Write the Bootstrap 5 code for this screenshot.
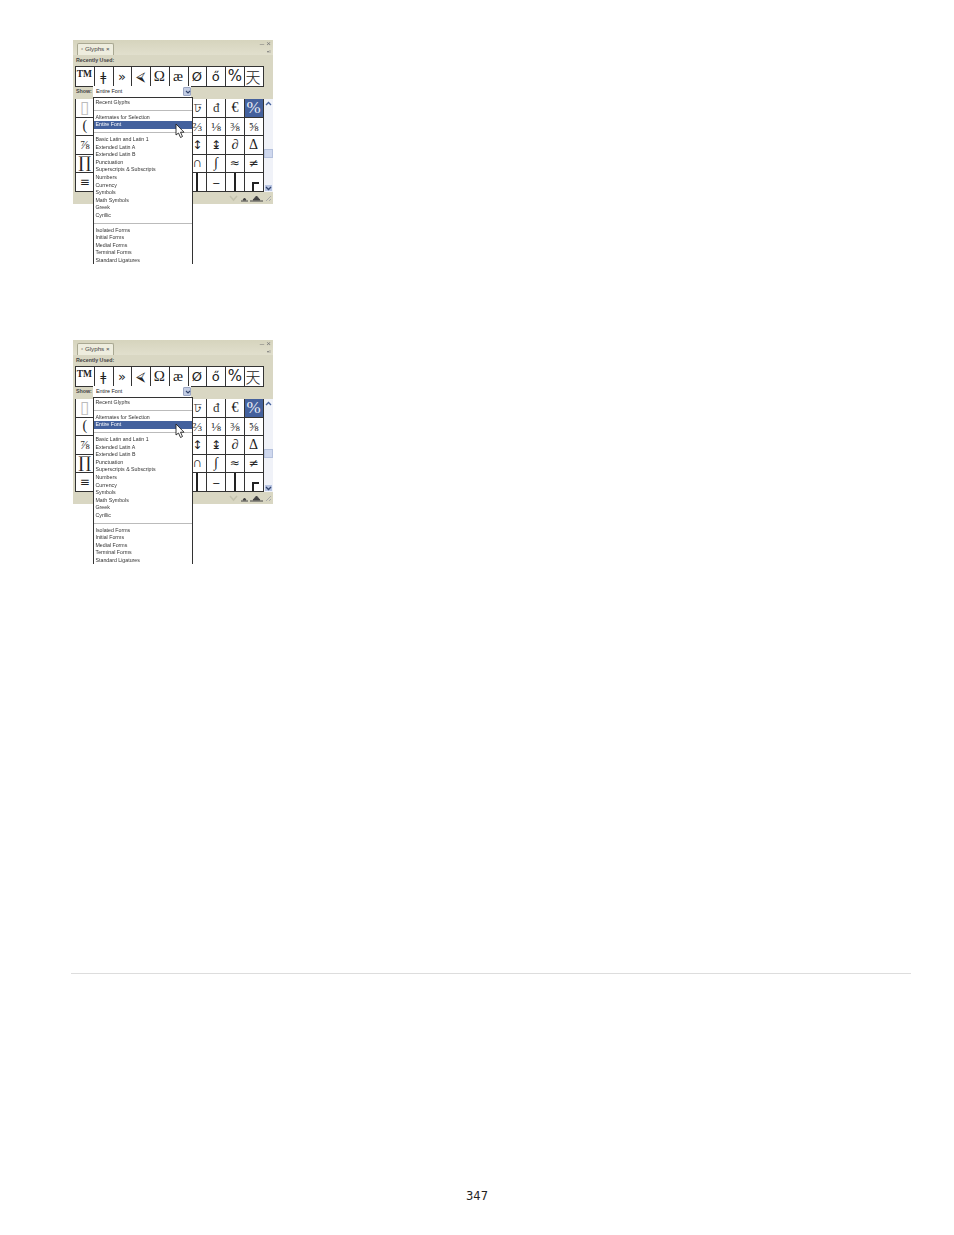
<!DOCTYPE html>
<html lang="en">
<head>
<meta charset="utf-8">
<title>Glyphs panel</title>
<link href="https://cdn.jsdelivr.net/npm/bootstrap@5.3.0/dist/css/bootstrap.min.css" rel="stylesheet">
<style>
html,body{height:100%;background:#fff}
.sheet{width:954px;height:1235px;padding:40px 43px 0 73px;font-family:"DejaVu Sans",sans-serif}
.shot-slot{height:300px}
.gpanel{position:relative;width:200px;height:164px;background:#d9d7c3;font-family:"Liberation Sans",sans-serif;color:#222;filter:blur(.4px);border-radius:1px}
.gtop{height:15px;background:linear-gradient(#d6d4bd,#e1dfcd);padding:3px 0 0 4px}
.gtab{width:37px;height:12px;background:#eeedde;border:1px solid #a9a892;border-bottom:0;border-radius:2px 2px 0 0;font-size:6.2px;line-height:10px;padding-left:3px;color:#444;white-space:nowrap}
.gwin{position:absolute;right:2px;top:0;font-size:8px;line-height:8px;color:#777}
.gmenuic{position:absolute;right:2px;top:9px;width:9px;height:5px;font-size:4px;line-height:5px;color:#777;text-align:right}
.glabel{height:11px;padding:2px 0 0 3px;font-size:5.3px;line-height:7px;font-weight:700;color:#444}
.grecent{display:grid;grid-template-columns:repeat(10,18.75px);grid-auto-rows:19px;margin-left:2px;width:189px;background:#fff;border:1px solid #333;border-width:1px 0 1px 1px}
.gcell{display:flex;align-items:center;justify-content:center;border-right:1px solid #333;border-bottom:1px solid #333;background:#fff;font-family:"Liberation Serif",serif;font-size:14px;line-height:1;color:#222;overflow:hidden}
.grecent .gcell{border-bottom:0;font-family:"DejaVu Sans",sans-serif;font-size:13px;padding-right:1px}
.grecent .gcell.tm{font-family:"Liberation Serif",serif;font-size:9.500px;font-weight:700;align-items:flex-start;padding-top:3px}
.grecent .gcell.pct{font-size:15px;letter-spacing:-1px}
.grecent .gcell.lig{font-family:"Liberation Serif",serif;font-size:15px}
.grecent .gcell.cjk{font-family:"Noto Sans CJK SC",sans-serif;font-weight:300;font-size:15px}
.gshow{height:12px;display:flex;padding-left:3px;font-size:5.3px;line-height:9px;color:#444;font-weight:700}
.gselect{position:absolute;left:20px;top:46px;width:98px;height:11px;background:#fff;font-weight:400;color:#222;padding-left:3px;font-size:5.400px;line-height:11px}
.gselect i{position:absolute;right:0;top:1px;width:8px;height:9px;background:#c3cde4;border:1px solid #9aa6c4;border-radius:1px}
.gselect svg{position:absolute;left:1px;top:2px}
.gmain{display:flex;margin-left:2px}
.gglyphs{display:grid;grid-template-columns:repeat(10,18.75px);grid-auto-rows:18.500px;width:188.500px;border-left:1px solid #333;background:#fff}
.gcell.sel{background:#44619d;color:#e8ecf6;font-size:17px}
.gcell.dim{color:#bbb;font-size:17px}
.gcell.big{font-family:"DejaVu Serif",serif;font-size:16px}
.gcell.frac{font-size:13px;color:#333}
.gcell.math{font-family:"DejaVu Sans",sans-serif;font-size:12px}
.gcell.dash{font-weight:700;font-size:12px}
.gstem{display:block;align-self:stretch;width:2px;background:#222}
.gcorner{display:block;align-self:flex-end;width:7px;height:9px;border:solid #222;border-width:2px 0 0 2px;margin-left:3px}
.gscroll{position:relative;width:9px;background:#f0f2f8}
.gscroll b{position:absolute;left:0;width:9px;background:#cfd8ee;border:1px solid #b5c1dd}
.gscroll svg{position:absolute;left:1px}
.gfoot{position:absolute;left:0;right:0;bottom:0;height:12px;background:#d9d7c3}
.gfoot svg{position:absolute;top:2px}
.gdrop{position:absolute;left:20px;top:57px;width:100px;height:167px;background:#fff;border:solid #333;border-width:1px 1px 0;overflow:hidden;font-size:5.250px;line-height:7.550px;color:#333;padding-top:.5px;white-space:nowrap}
.gitem{height:7.550px;padding-left:1.500px}
.gitem.on{background:#44619d;color:#fff}
.gsep{height:7.550px;position:relative}
.gsep::after{content:"";position:absolute;left:0;right:0;top:3.500px;border-top:1px solid #bbb}
.gptr{position:absolute;left:102px;top:84px}
.grule{height:1px;background:#ddd;margin:333px 0 0 -2px;width:840px}
.gpage{margin-top:215px;width:808px;text-align:center;font-size:11.500px;line-height:14px;color:#222}
</style>
</head>
<body class="m-0">
<div class="sheet">
  <div class="shot-slot" id="slotA">
    <div class="gpanel" id="proto">
      <div class="gtop"><div class="gtab">◦ Glyphs ×</div></div>
      <div class="gwin">– ×</div>
      <div class="gmenuic">▾≡</div>
      <div class="glabel">Recently Used:</div>
      <div class="grecent">
        <div class="gcell tm">TM</div><div class="gcell">ǂ</div><div class="gcell">»</div><div class="gcell">⮘</div><div class="gcell lig">Ω</div><div class="gcell lig">æ</div><div class="gcell">Ø</div><div class="gcell">ő</div><div class="gcell pct">%</div><div class="gcell cjk">天</div>
      </div>
      <div class="gshow">Show:</div>
      <div class="gselect">Entire Font<i><svg width="6" height="5" viewBox="0 0 6 5"><path d="M1 1l2 2 2-2" fill="none" stroke="#34466f" stroke-width="1.2"/></svg></i></div>
      <div class="gmain">
        <div class="gglyphs">
          <div class="gcell dim">▯</div><div class="gcell"></div><div class="gcell"></div><div class="gcell"></div><div class="gcell"></div><div class="gcell"></div><div class="gcell frac">ঢ</div><div class="gcell frac">đ</div><div class="gcell">€</div><div class="gcell sel">%</div>
          <div class="gcell">(</div><div class="gcell"></div><div class="gcell"></div><div class="gcell"></div><div class="gcell"></div><div class="gcell"></div><div class="gcell frac">⅔</div><div class="gcell frac">⅛</div><div class="gcell frac">⅜</div><div class="gcell frac">⅝</div>
          <div class="gcell frac">⅞</div><div class="gcell"></div><div class="gcell"></div><div class="gcell"></div><div class="gcell"></div><div class="gcell"></div><div class="gcell math">↕</div><div class="gcell math">↨</div><div class="gcell">∂</div><div class="gcell">Δ</div>
          <div class="gcell big">∏</div><div class="gcell"></div><div class="gcell"></div><div class="gcell"></div><div class="gcell"></div><div class="gcell"></div><div class="gcell">∩</div><div class="gcell">∫</div><div class="gcell math">≈</div><div class="gcell math">≠</div>
          <div class="gcell math">≡</div><div class="gcell"></div><div class="gcell"></div><div class="gcell"></div><div class="gcell"></div><div class="gcell"></div><div class="gcell"><span class="gstem"></span></div><div class="gcell dash">–</div><div class="gcell"><span class="gstem"></span></div><div class="gcell"><span class="gcorner"></span></div>
        </div>
        <div class="gscroll">
          <svg style="top:2px" width="7" height="6" viewBox="0 0 7 6"><path d="M1 4l2.500-2.500 2.500 2.500" fill="none" stroke="#44619d" stroke-width="1.300"/></svg>
          <b style="top:50px;height:9px"></b>
          <svg style="bottom:1px" width="7" height="6" viewBox="0 0 7 6"><rect x="-1" width="9" height="6" fill="#b9c6e4"/><path d="M1 2l2.500 2.500 2.500-2.500" fill="none" stroke="#34466f" stroke-width="1.300"/></svg>
        </div>
      </div>
      <div class="gfoot">
        <svg style="left:156px" width="9" height="9" viewBox="0 0 9 9"><path d="M1 2l3.500 4 3.500-4" fill="none" stroke="#c3c2ad" stroke-width="1.500"/></svg>
        <svg style="left:167px" width="9" height="9" viewBox="0 0 9 9"><path d="M1 7h7M3 6l1.500-2 1.500 2z" fill="#444" stroke="#444"/></svg>
        <svg style="left:177px" width="13" height="9" viewBox="0 0 13 9"><path d="M0 7h13M3 6l3.500-4 3.500 4z" fill="#444" stroke="#444"/></svg>
        <svg style="left:192px" width="7" height="9" viewBox="0 0 7 9"><path d="M1 7l5-5M4 7l2-2" stroke="#aaa" fill="none"/></svg>
      </div>
      <div class="gdrop">
        <div class="gitem">Recent Glyphs</div>
        <div class="gsep"></div>
        <div class="gitem">Alternates for Selection</div>
        <div class="gitem on">Entire Font</div>
        <div class="gsep"></div>
        <div class="gitem">Basic Latin and Latin 1</div>
        <div class="gitem">Extended Latin A</div>
        <div class="gitem">Extended Latin B</div>
        <div class="gitem">Punctuation</div>
        <div class="gitem">Superscripts &amp; Subscripts</div>
        <div class="gitem">Numbers</div>
        <div class="gitem">Currency</div>
        <div class="gitem">Symbols</div>
        <div class="gitem">Math Symbols</div>
        <div class="gitem">Greek</div>
        <div class="gitem">Cyrillic</div>
        <div class="gsep"></div>
        <div class="gitem">Isolated Forms</div>
        <div class="gitem">Initial Forms</div>
        <div class="gitem">Medial Forms</div>
        <div class="gitem">Terminal Forms</div>
        <div class="gitem">Standard Ligatures</div>
      </div>
      <svg class="gptr" width="10" height="14" viewBox="0 0 10 14"><path d="M1 0v11l2.500-2 2 4.500 2-1-2-4.300H9z" fill="#fff" stroke="#222" stroke-width=".9"/></svg>
    </div>
  </div>
  <div class="shot-slot" id="slotB"></div>
  <div class="grule"></div>
  <div class="gpage">347</div>
</div>
<script>
document.getElementById('slotB').appendChild(document.getElementById('proto').cloneNode(true)).removeAttribute('id');
</script>
<script src="https://cdn.jsdelivr.net/npm/bootstrap@5.3.0/dist/js/bootstrap.bundle.min.js"></script>
</body>
</html>
